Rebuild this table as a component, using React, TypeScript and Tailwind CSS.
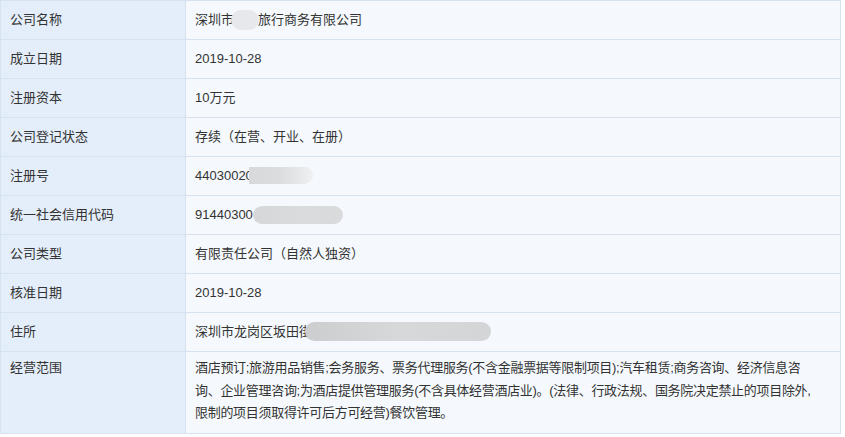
import React from "react";

type Row = { label: string; value: React.ReactNode; tall?: boolean };

// grey smudge standing in for masked characters
function Mask({ w, h = 18, tone = "bg-[#dcdee0]", shift = "" }: { w: number; h?: number; tone?: string; shift?: string }) {
  return (
    <span
      className={`relative inline-block align-middle rounded-full -mt-[2px] ${tone} ${shift}`}
      style={{ width: w, height: h }}
    />
  );
}

const SCOPE = [
  "酒店预订;旅游用品销售;会务服务、票务代理服务(不含金融票据等限制项目);汽车租赁;商务咨询、经济信息咨",
  "询、企业管理咨询;为酒店提供管理服务(不含具体经营酒店业)。(法律、行政法规、国务院决定禁止的项目除外,",
  "限制的项目须取得许可后方可经营)餐饮管理。",
];

const ROWS: Row[] = [
  {
    label: "公司名称",
    value: (
      <>
        深圳市<span className="relative inline-block align-middle w-[28px] h-[20px] -ml-[3px] -mr-[1px] -mt-[2px] rounded-full bg-[#e6e8eb]" />旅行商务有限公司
      </>
    ),
  },
  { label: "成立日期", value: "2019-10-28" },
  { label: "注册资本", value: "10万元" },
  { label: "公司登记状态", value: "存续（在营、开业、在册）" },
  {
    label: "注册号",
    value: (
      <>
        44030020
        <Mask w={64} h={17} shift="-ml-[4px]" tone="rounded-l-none bg-gradient-to-r from-[#d8d9db] via-[#dcdddf] to-[#eef0f2]" />
      </>
    ),
  },
  {
    label: "统一社会信用代码",
    value: (
      <>
        91440300
        <Mask w={90} h={18} tone="bg-gradient-to-r from-[#d6d7d9] via-[#dadbdd] to-[#d9dadc]" />
      </>
    ),
  },
  { label: "公司类型", value: "有限责任公司（自然人独资）" },
  { label: "核准日期", value: "2019-10-28" },
  {
    label: "住所",
    value: (
      <>
        深圳市龙岗区坂田街
        <Mask w={186} h={19} shift="-ml-[7px]" tone="bg-gradient-to-r from-[#cbcdcf] via-[#d7d8da] to-[#d4d5d7]" />
      </>
    ),
  },
  {
    label: "经营范围",
    tall: true,
    value: SCOPE.map((line, i) => (
      <React.Fragment key={i}>
        {line}
        {i < SCOPE.length - 1 && <br />}
      </React.Fragment>
    )),
  },
];

export default function App() {
  return (
    <div className="w-[845px] h-[437px] bg-white font-['Liberation_Sans','Noto_Sans_CJK_SC',sans-serif] text-[13px] text-[#333]">
      <div className="w-[841px] border border-[#d6e2ef]">
        {ROWS.map((r, i) => (
          <div
            key={r.label}
            className={`flex ${i < ROWS.length - 1 ? "border-b border-[#d6e2ef]" : ""}`}
          >
            <div
              className={`w-[185px] shrink-0 bg-[#e4eefa] border-r border-[#d6e2ef] pl-[9px] ${
                r.tall ? "h-[81px] pt-[5px] leading-[22.5px]" : "h-[38px] flex items-center"
              }`}
            >
              {r.label}
            </div>
            <div
              className={`flex-1 bg-[#f5f9fd] pl-[9px] pr-[10px] whitespace-nowrap ${
                r.tall
                  ? "h-[81px] pt-[5px] leading-[22.5px] tracking-[-0.3px]"
                  : "h-[38px] flex items-center"
              }`}
            >
              <span>{r.value}</span>
            </div>
          </div>
        ))}
      </div>
    </div>
  );
}
